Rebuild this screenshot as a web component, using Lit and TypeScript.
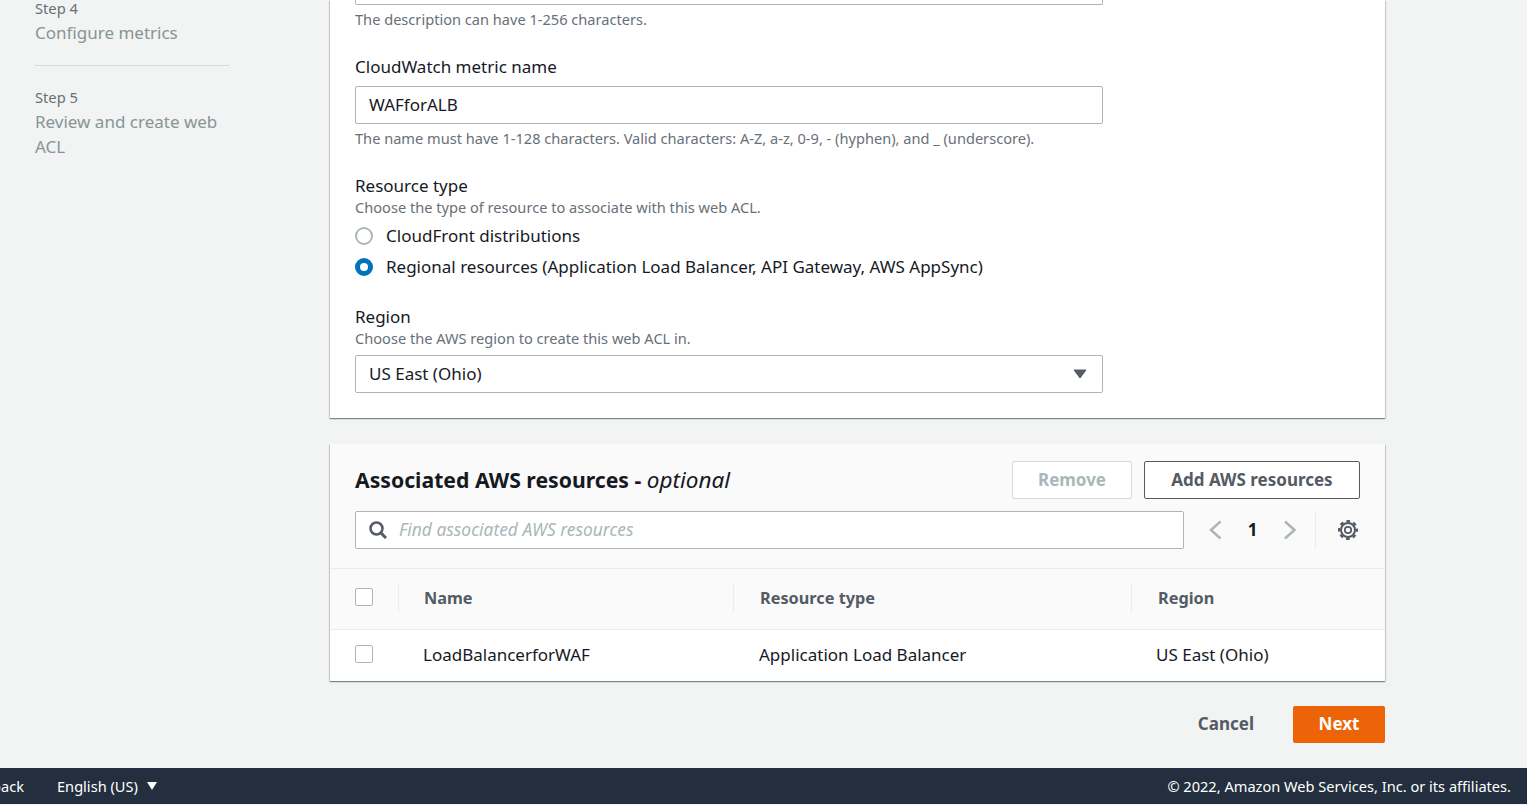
import { LitElement, html, css } from "lit";
import { customElement } from "lit/decorators.js";

const caret = html`<svg width="14" height="10" viewBox="0 0 14 10"><path d="M1 1h12L7 9z" fill="currentColor" stroke="currentColor" stroke-linejoin="round"/></svg>`;

@customElement("app-root")
export class AppRoot extends LitElement {
  static styles = css`
    :host {
      display: flex;
      flex-direction: column;
      height: 805px;
      overflow: hidden;
      background: #f2f3f3;
      color: #16191f;
      font-family: "Noto Sans", sans-serif;
      font-size: 17px;
    }
    .page {
      flex: 1;
      display: flex;
      min-height: 0;
    }
    .side {
      width: 194px;
      margin-left: 35px;
      flex: none;
    }
    .step {
      font-size: 14.7px;
      line-height: 20px;
      color: #687078;
    }
    .step-name {
      color: #879596;
      line-height: 25px;
      margin-top: 2px;
    }
    .side hr {
      border: 0;
      border-top: 1px solid #d5dbdb;
      margin: 20px 0 21px;
    }
    .side .first {
      line-height: 16px;
      margin-bottom: 4px;
    }
    .main {
      width: 1055px;
      margin-left: 101px;
      flex: none;
      display: flex;
      flex-direction: column;
    }
    .card {
      background: #fff;
      box-shadow: 0 1px 1px 0 rgba(0, 28, 36, 0.3), 1px 1px 1px 0 rgba(0, 28, 36, 0.15), -1px 1px 1px 0 rgba(0, 28, 36, 0.15);
    }
    .form {
      height: 418px;
      padding: 0 25px;
      box-sizing: border-box;
    }
    .stub {
      width: 748px;
      height: 5px;
      box-sizing: border-box;
      border: 1px solid #aab7b8;
      border-top: 0;
      border-radius: 0 0 2px 2px;
    }
    .hint {
      font-size: 14.6px;
      line-height: 18px;
      padding-bottom: 2px;
      color: #687078;
    }
    .label {
      line-height: 22px;
    }
    .input {
      display: flex;
      align-items: center;
      justify-content: space-between;
      width: 748px;
      height: 38px;
      box-sizing: border-box;
      padding: 0 15px 2px 13px;
      border: 1px solid #aab7b8;
      border-radius: 2px;
      background: #fff;
    }
    .input svg {
      color: #545b64;
      margin-top: 2px;
    }
    .radio {
      display: flex;
      align-items: center;
      gap: 13px;
      height: 22px;
    }
    .radio span + span {
      margin-bottom: 2px;
    }
    .dot {
      width: 18px;
      height: 18px;
      box-sizing: border-box;
      border-radius: 50%;
      border: 2px solid #aab7b8;
      background: #fff;
      flex: none;
    }
    .dot.on {
      border: 5px solid #0073bb;
    }
    .resources {
      margin-top: 26px;
      height: 237px;
      display: flex;
      flex-direction: column;
    }
    .res-head {
      background: #fafafa;
      height: 125px;
      box-sizing: border-box;
      padding: 17px 25px 0;
      border-bottom: 1px solid #eaeded;
    }
    .title-row {
      display: flex;
      align-items: center;
      height: 38px;
    }
    h2 {
      margin: 0;
      font-size: 21.2px;
      line-height: 38px;
      font-weight: 700;
      flex: 1;
    }
    h2 em {
      font-size: 22.5px;
      font-weight: 400;
    }
    .btn {
      display: flex;
      align-items: center;
      justify-content: center;
      height: 38px;
      box-sizing: border-box;
      padding-bottom: 2px;
      border: 1px solid #545b64;
      border-radius: 2px;
      color: #545b64;
      font-weight: 700;
      background: #fff;
    }
    .btn.off {
      width: 120px;
      margin-right: 12px;
      border-color: #d5dbdb;
      color: #aab7b8;
    }
    .btn.add {
      width: 216px;
    }
    .tools {
      display: flex;
      align-items: center;
      margin-top: 12px;
    }
    .search {
      width: 829px;
      flex: none;
      justify-content: flex-start;
      gap: 12px;
      font-style: italic;
      font-size: 17.4px;
      color: #aab7b8;
    }
    .pager {
      display: flex;
      align-items: center;
      height: 38px;
      margin-left: 24px;
      color: #16191f;
      font-weight: 700;
    }
    .pager .num {
      width: 59px;
      box-sizing: border-box;
      padding-right: 2px;
      text-align: center;
      margin-bottom: 2px;
    }
    .tools .sep {
      width: 1px;
      height: 38px;
      background: #eaeded;
      margin: 0 21px 0 16px;
    }
    .row {
      display: grid;
      grid-template-columns: 68px 335px 398px 1fr;
      align-items: center;
      padding-bottom: 2px;
      box-sizing: border-box;
    }
    .row.head {
      height: 61px;
      background: #fafafa;
      border-bottom: 1px solid #eaeded;
      color: #545b64;
      font-size: 16.3px;
      font-weight: 700;
    }
    .row.body {
      flex: 1;
    }
    .row > div {
      line-height: 30px;
      padding-left: 25px;
    }
    .row.head > div + div {
      border-left: 1px solid #eaeded;
    }
    .row.head > div:nth-child(n + 3),
    .row.body > div:nth-child(3) {
      padding-left: 26px;
    }
    .row > .check {
      display: flex;
      align-items: center;
    }
    .box {
      width: 18px;
      height: 18px;
      box-sizing: border-box;
      border: 1px solid #aab7b8;
      border-radius: 2px;
      background: #fff;
      margin-top: -2px;
    }
    .actions {
      display: flex;
      align-items: center;
      justify-content: flex-end;
      margin-top: 25px;
      height: 37px;
    }
    .cancel {
      color: #545b64;
      font-weight: 700;
      margin: 0 39px 2px 0;
    }
    .next {
      width: 92px;
      height: 37px;
      box-sizing: border-box;
      padding-bottom: 2px;
      display: flex;
      align-items: center;
      justify-content: center;
      background: #ec6407;
      color: #fff;
      font-weight: 700;
      border-radius: 2px;
    }
    footer {
      flex: none;
      height: 36px;
      margin-bottom: 1px;
      background: #232f3e;
      color: #fff;
      font-size: 14.6px;
      display: flex;
      align-items: center;
    }
    .clip {
      width: 24px;
      overflow: hidden;
      display: flex;
      justify-content: flex-end;
      margin-right: 33px;
    }
    .lang {
      display: flex;
      align-items: center;
      gap: 9px;
      flex: 1;
    }
    .copy {
      margin-right: 16px;
    }
  `;

  render() {
    return html`
      <div class="page">
        <nav class="side">
          <div class="step first">Step 4</div>
          <div class="step-name">Configure metrics</div>
          <hr />
          <div class="step">Step 5</div>
          <div class="step-name">Review and create web ACL</div>
        </nav>
        <div class="main">
          <section class="card form">
            <div class="stub"></div>
            <div class="hint" style="margin-top:5px">The description can have 1-256 characters.</div>
            <div class="label" style="margin-top:26px">CloudWatch metric name</div>
            <div class="input" style="margin-top:8px">WAFforALB</div>
            <div class="hint" style="margin-top:5px">The name must have 1-128 characters. Valid characters: A-Z, a-z, 0-9, - (hyphen), and _ (underscore).</div>
            <div class="label" style="margin-top:26px">Resource type</div>
            <div class="hint" style="margin-top:1px">Choose the type of resource to associate with this web ACL.</div>
            <div class="radio" style="margin-top:7px"><span class="dot"></span><span>CloudFront distributions</span></div>
            <div class="radio" style="margin-top:9px"><span class="dot on"></span><span>Regional resources (Application Load Balancer, API Gateway, AWS AppSync)</span></div>
            <div class="label" style="margin-top:28px">Region</div>
            <div class="hint" style="margin-top:1px">Choose the AWS region to create this web ACL in.</div>
            <div class="input" style="margin-top:6px">US East (Ohio)${caret}</div>
          </section>
          <section class="card resources">
            <div class="res-head">
              <div class="title-row">
                <h2>Associated AWS resources - <em>optional</em></h2>
                <div class="btn off">Remove</div>
                <div class="btn add">Add AWS resources</div>
              </div>
              <div class="tools">
                <div class="input search">
                  <svg width="18" height="18" viewBox="0 0 18 18" fill="none" stroke="currentColor" stroke-width="2.5"><circle cx="7.5" cy="7.5" r="6"/><path d="M12 12l5 5" stroke-width="3"/></svg>
                  Find associated AWS resources
                </div>
                <div class="pager">
                  <svg width="16" height="20" viewBox="0 0 16 20" fill="none" stroke="#aab7b8" stroke-width="2.5"><path d="M12.5 1.5L3 10l9.5 8.5"/></svg>
                  <span class="num">1</span>
                  <svg width="16" height="20" viewBox="0 0 16 20" fill="none" stroke="#aab7b8" stroke-width="2.5"><path d="M2 1.5l9.5 8.5L2 18.5"/></svg>
                </div>
                <span class="sep"></span>
                <svg width="22" height="22" viewBox="0 0 22 22" fill="none" stroke="#545b64"><circle cx="11" cy="11" r="3.2" stroke-width="1.7"/><circle cx="11" cy="11" r="7" stroke-width="2"/><circle cx="11" cy="11" r="8.8" stroke-width="2.4" stroke-dasharray="3.6 3.31" stroke-dashoffset="1.8"/></svg>
              </div>
            </div>
            <div class="row head">
              <div class="check"><span class="box"></span></div>
              <div>Name</div>
              <div>Resource type</div>
              <div>Region</div>
            </div>
            <div class="row body">
              <div class="check"><span class="box"></span></div>
              <div>LoadBalancerforWAF</div>
              <div>Application Load Balancer</div>
              <div>US East (Ohio)</div>
            </div>
          </section>
          <div class="actions">
            <span class="cancel">Cancel</span>
            <span class="next">Next</span>
          </div>
        </div>
      </div>
      <footer>
        <span class="clip"><span>Feedback</span></span>
        <span class="lang">English (US) <svg width="10" height="8" viewBox="0 0 10 8"><path d="M0 0h10L5 8z" fill="#fff"/></svg></span>
        <span class="copy">© 2022, Amazon Web Services, Inc. or its affiliates.</span>
      </footer>
    `;
  }
}
